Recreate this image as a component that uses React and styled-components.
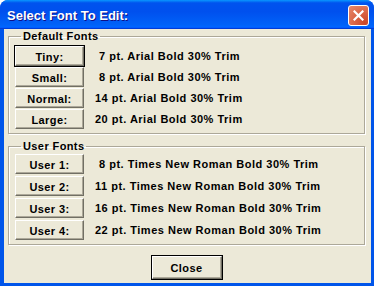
import styled, { createGlobalStyle } from "styled-components";

const GlobalStyle = createGlobalStyle`
  html, body {
    margin: 0;
    padding: 0;
    background: #ffffff;
  }
`;

const Window = styled.div`
  width: 374px;
  height: 286px;
  box-sizing: border-box;
  display: flex;
  flex-direction: column;
  background: #0055ea;
  border-radius: 8px 8px 0 0;
  overflow: hidden;
  font-family: "Liberation Sans", Arial, sans-serif;
`;

const TitleBar = styled.div`
  height: 29px;
  flex: none;
  display: flex;
  align-items: center;
  justify-content: space-between;
  padding: 0 5px 0 7px;
  background: linear-gradient(
    to bottom,
    #0997ff 0%,
    #0053ee 10%,
    #0050ee 40%,
    #0062f8 85%,
    #0066ff 92%,
    #005bff 95%,
    #003dd7 97%,
    #003dd7 100%
  );
`;

const Title = styled.span`
  color: #ffffff;
  font-weight: bold;
  font-size: 13px;
  text-shadow: 1px 1px #0f1089;
  margin-top: 1px;
`;

const CloseButton = styled.div`
  width: 21px;
  height: 21px;
  box-sizing: border-box;
  border: 1px solid #ffffff;
  border-radius: 3px;
  display: flex;
  align-items: center;
  justify-content: center;
  background: radial-gradient(circle at 85% 90%, #cc4628 0%, #dc6b4c 55%, #e7896c 100%);
  margin-top: 1px;
`;

const Client = styled.div`
  flex: 1;
  margin: 0 3px 3px 4px;
  background: #ece9d8;
  display: flex;
  flex-direction: column;
  padding: 0 6px 0 4px;
`;

const Group = styled.fieldset`
  margin: ${(p) => p.$top}px 0 0 0;
  padding: ${(p) => p.$padTop}px 6px 4px 6px;
  border: 1px solid #aca899;
  box-shadow: inset 1px 1px #ffffff, 1px 1px #ffffff;
  display: flex;
  flex-direction: column;
  gap: ${(p) => p.$gap}px;
  min-width: 0;
`;

const Legend = styled.legend`
  font-size: 11px;
  font-weight: bold;
  letter-spacing: 0.4px;
  color: #000000;
  padding: 0 2px;
  margin-left: 6px;
`;

const Row = styled.div`
  display: flex;
  align-items: center;
  gap: 11px;
  height: 20px;
`;

const Button = styled.div`
  width: ${(p) => p.$w || 69}px;
  height: ${(p) => p.$h || 20}px;
  box-sizing: border-box;
  display: flex;
  align-items: center;
  justify-content: center;
  background: #ece9d8;
  font-size: 11px;
  font-weight: bold;
  letter-spacing: 0.4px;
  color: #000000;
  border-style: solid;
  border-width: 1px;
  border-color: #ffffff #716f64 #716f64 #ffffff;
  box-shadow: inset -1px -1px #aca899;
  outline: ${(p) => (p.$default ? "1px solid #000000" : "none")};
  padding-top: 1px;
`;

const Label = styled.span`
  font-size: 11px;
  font-weight: bold;
  letter-spacing: 0.5px;
  color: #000000;
  padding-left: ${(p) => p.$indent}px;
  white-space: nowrap;
`;

const Footer = styled.div`
  display: flex;
  justify-content: center;
  padding-top: 11px;
`;

const defaults = [
  ["Tiny:", "7 pt. Arial Bold 30% Trim"],
  ["Small:", "8 pt. Arial Bold 30% Trim"],
  ["Normal:", "14 pt. Arial Bold 30% Trim"],
  ["Large:", "20 pt. Arial Bold 30% Trim"],
];

const users = [
  ["User 1:", "8 pt. Times New Roman Bold 30% Trim"],
  ["User 2:", "11 pt. Times New Roman Bold 30% Trim"],
  ["User 3:", "16 pt. Times New Roman Bold 30% Trim"],
  ["User 4:", "22 pt. Times New Roman Bold 30% Trim"],
];

function FontRow({ name, desc, isDefault }) {
  const single = /^\d /.test(desc);
  return (
    <Row>
      <Button $default={isDefault}>{name}</Button>
      <Label $indent={single ? 4 : 0}>{desc}</Label>
    </Row>
  );
}

export default function App() {
  return (
    <>
      <GlobalStyle />
      <Window>
        <TitleBar>
          <Title>Select Font To Edit:</Title>
          <CloseButton>
            <svg width="11" height="11" viewBox="0 0 11 11">
              <path d="M1.5 1.5 L9.5 9.5 M9.5 1.5 L1.5 9.5" stroke="#ffffff" strokeWidth="2.2" strokeLinecap="square" />
            </svg>
          </CloseButton>
        </TitleBar>
        <Client>
          <Group $top={1} $padTop={4} $gap={1}>
            <Legend>Default Fonts</Legend>
            {defaults.map(([n, d], i) => (
              <FontRow key={n} name={n} desc={d} isDefault={i === 0} />
            ))}
          </Group>
          <Group $top={6} $padTop={2} $gap={2}>
            <Legend>User Fonts</Legend>
            {users.map(([n, d]) => (
              <FontRow key={n} name={n} desc={d} />
            ))}
          </Group>
          <Footer>
            <Button $default $w={70} $h={23}>Close</Button>
          </Footer>
        </Client>
      </Window>
    </>
  );
}
